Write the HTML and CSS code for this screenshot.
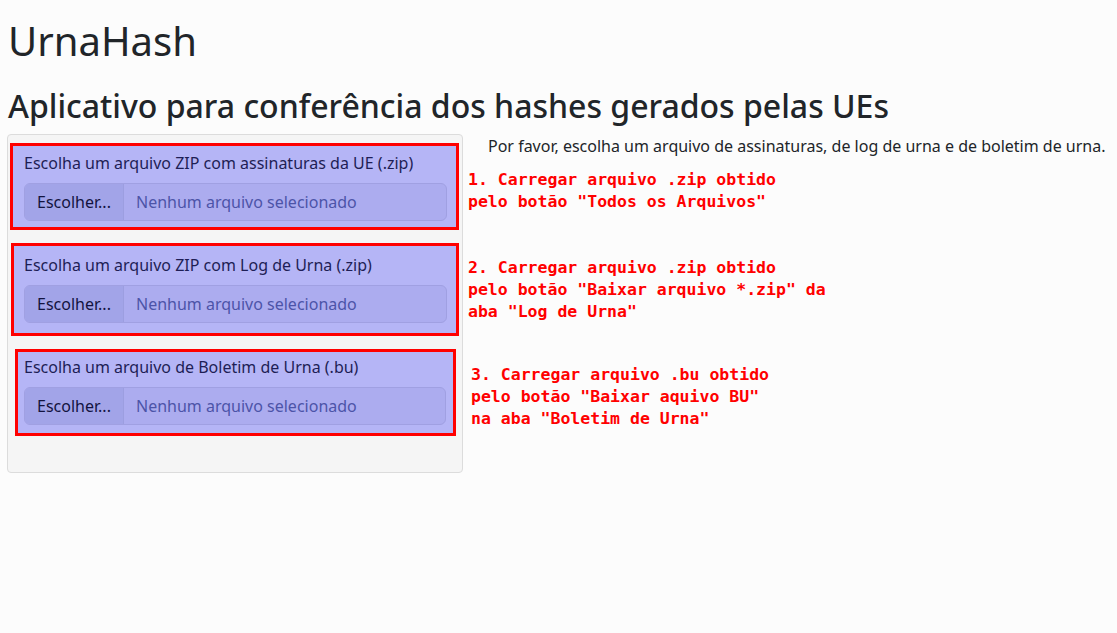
FILE: index.html
```html
<!DOCTYPE html>
<html lang="pt-BR">
<head>
<meta charset="utf-8">
<title>UrnaHash</title>
<link rel="stylesheet" href="styles.css">
</head>
<body>
<div class="page">
  <h1 class="title">UrnaHash</h1>
  <h2 class="subtitle">Aplicativo para conferência dos hashes gerados pelas UEs</h2>
  <div class="row">
    <div class="panel">
      <div class="group group-1">
        <div class="label">Escolha um arquivo ZIP com assinaturas da UE (.zip)</div>
        <div class="file"><span class="file-btn">Escolher...</span><span class="file-name">Nenhum arquivo selecionado</span></div>
      </div>
      <div class="group group-2">
        <div class="label">Escolha um arquivo ZIP com Log de Urna (.zip)</div>
        <div class="file"><span class="file-btn">Escolher...</span><span class="file-name">Nenhum arquivo selecionado</span></div>
      </div>
      <div class="group group-3">
        <div class="label">Escolha um arquivo de Boletim de Urna (.bu)</div>
        <div class="file"><span class="file-btn">Escolher...</span><span class="file-name">Nenhum arquivo selecionado</span></div>
      </div>
    </div>
    <div class="side">
      <p class="intro">Por favor, escolha um arquivo de assinaturas, de log de urna e de boletim de urna.</p>
      <div class="note note-1">1. Carregar arquivo .zip obtido<br>pelo botão "Todos os Arquivos"</div>
      <div class="note note-2">2. Carregar arquivo .zip obtido<br>pelo botão "Baixar arquivo *.zip" da<br>aba "Log de Urna"</div>
      <div class="note note-3">3. Carregar arquivo .bu obtido<br>pelo botão "Baixar aquivo BU"<br>na aba "Boletim de Urna"</div>
    </div>
  </div>
</div>
</body>
</html>
```

FILE: styles.css
```css
html, body {
  margin: 0;
  padding: 0;
  background: #fcfcfc;
}
body {
  font-family: "Noto Sans", "Open Sans", sans-serif;
  color: #212529;
  font-size: 16px;
  line-height: 1.5;
}
.page {
  padding: 17px 0 0 8px;
}
.title {
  margin: 0;
  font-size: 40px;
  font-weight: 400;
  line-height: 48px;
}
.subtitle {
  margin: 22px 0 9px 0;
  font-size: 32px;
  font-weight: 500;
  line-height: 38px;
}
.row {
  display: flex;
  align-items: flex-start;
}
.panel {
  margin-left: -1px;
  width: 454px;
  background: #f5f5f5;
  border: 1px solid #dcdcdc;
  border-radius: 4px;
  padding: 8px 0 36px 0;
}
.group {
  background: #b5b5f6;
  border: 3px solid #ff0000;
}
.group-1 {
  margin: 0 3px 0 2px;
  padding: 5px 9px 6px 11px;
}
.group-2 {
  margin: 13px 3px 0 3px;
  padding: 7px 9px 10px 10px;
}
.group-3 {
  margin: 13px 6px 0 7px;
  padding: 3px 7px 8px 6px;
}
.label {
  color: #1e1e55;
  height: 24px;
  margin-bottom: 8px;
}
.file {
  display: flex;
  height: 36px;
  border: 1px solid #a0a0e2;
  border-radius: 6px;
  overflow: hidden;
  background: #acacef;
}
.file-btn {
  width: 98px;
  flex: none;
  background: #a2a4e8;
  border-right: 1px solid #9c9ee0;
  color: #13133f;
  display: flex;
  align-items: center;
  justify-content: center;
}
.file-name {
  padding-left: 12px;
  color: #4c54a8;
  display: flex;
  align-items: center;
}
.side {
  padding-left: 5px;
  flex: 1;
}
.intro {
  margin: 0;
  padding-left: 20px;
  line-height: 24px;
  color: #212529;
  font-size: 16px;
}
.note {
  font-family: "DejaVu Sans Mono", "Liberation Mono", monospace;
  font-weight: bold;
  color: #ff0000;
  font-size: 16.5px;
  line-height: 22px;
}
.note-1 { margin-top: 11px; }
.note-2 { margin-top: 44px; }
.note-3 { margin-top: 41px; margin-left: 3px; }
```
